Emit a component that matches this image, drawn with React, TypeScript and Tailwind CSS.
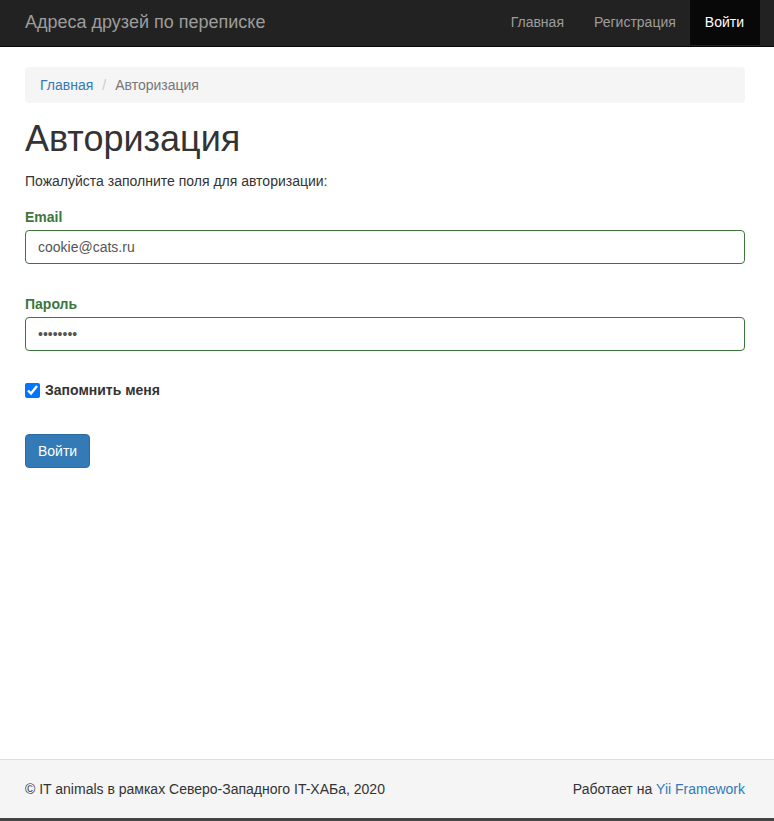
import React from "react";

const font = { fontFamily: '"Liberation Sans", Arial, sans-serif' };

const Navbar = () => (
  <div className="w-full h-[47px] bg-[#222] border-b border-[#080808] flex justify-between shrink-0">
    <div className="pl-[25px] pb-[1px] flex items-center text-[18px] text-[#9d9d9d]">
      Адреса друзей по переписке
    </div>
    <div className="flex pr-[14px] pb-[1px] text-[14px]">
      <a className="px-[15px] flex items-center text-[#9d9d9d]">Главная</a>
      <a className="px-[15px] flex items-center text-[#9d9d9d]">Регистрация</a>
      <a className="pl-[15px] pr-[16px] ml-[-1px] flex items-center text-white bg-[#080808]">Войти</a>
    </div>
  </div>
);

const Field = ({ label, value, type }: { label: string; value: string; type: string }) => (
  <div className="flex flex-col">
    <label className="text-[14px] leading-[20px] font-bold text-[#3c763d] mb-[3px]">{label}</label>
    <input
      type={type}
      defaultValue={value}
      className="h-[34px] w-full border border-[#3c763d] rounded-[4px] px-[12px] text-[14px] text-[#555] outline-none"
      style={font}
    />
  </div>
);

export default function App() {
  return (
    <div className="w-full h-[821px] flex flex-col bg-white text-[#333] text-[14px]" style={font}>
      <Navbar />
      <div className="flex-1 px-[25px] pr-[29px] pt-[20px]">
        <div className="h-[36px] bg-[#f5f5f5] rounded-[4px] px-[15px] flex items-center gap-[9px]">
          <a className="text-[#337ab7]">Главная</a>
          <span className="text-[#ccc]">/</span>
          <span className="text-[#777]">Авторизация</span>
        </div>
        <h1 className="mt-[16px] mb-[12px] text-[36px] leading-[40px] font-normal">Авторизация</h1>
        <p className="leading-[20px] mb-[16px]">Пожалуйста заполните поля для авторизации:</p>
        <Field label="Email" value="cookie@cats.ru" type="text" />
        <div className="h-[30px]" />
        <Field label="Пароль" value="cookiepw" type="password" />
        <label className="mt-[29px] flex items-center gap-[5px] h-[20px] font-bold">
          <input type="checkbox" defaultChecked className="w-[15px] h-[15px] m-0" />
          Запомнить меня
        </label>
        <button className="mt-[34px] h-[34px] px-[12px] bg-[#337ab7] border border-[#2e6da4] rounded-[4px] text-white text-[14px]">
          Войти
        </button>
      </div>
      <div className="h-[59px] bg-[#f5f5f5] border-t border-[#ddd] px-[25px] pr-[29px] flex justify-between items-center shrink-0">
        <span>© IT animals в рамках Северо-Западного IT-ХАБа, 2020</span>
        <span>
          Работает на <a className="text-[#337ab7]">Yii Framework</a>
        </span>
      </div>
      <div className="h-[3px] bg-[#444] shrink-0" />
    </div>
  );
}
